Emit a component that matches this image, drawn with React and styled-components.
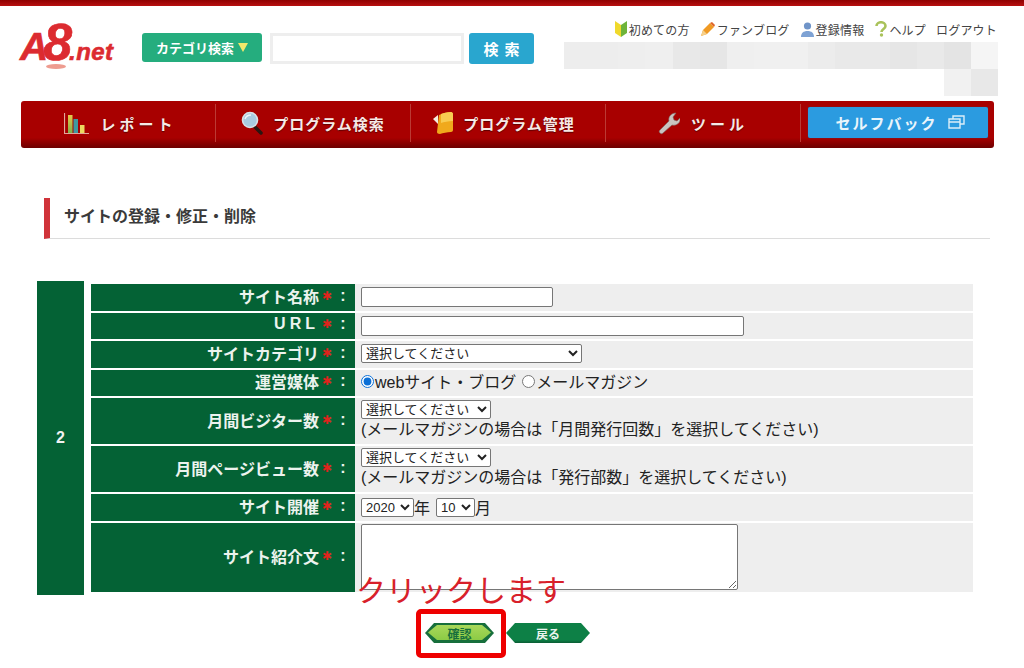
import React from 'react'
import styled, { createGlobalStyle } from 'styled-components'

const GlobalStyle = createGlobalStyle`
	html, body {
		margin: 0;
		padding: 0;
		background: #fff;
		font-family: "Liberation Sans", "Noto Sans CJK JP", sans-serif;
		color: #222;
	}
`

const Page = styled.div`
	position: relative;
	width: 1024px;
	height: 668px;
	overflow: hidden;
`

const TopBar = styled.div`
	height: 6px;
	background: linear-gradient(#8f0000, #b80f0f);
`

const Header = styled.header`
	display: flex;
	height: 95px;
	padding: 0 26px 0 20px;
`

const Logo = styled.div`
	position: relative;
	display: flex;
	align-items: baseline;
	width: 95px;
	height: 46px;
	margin-top: 13px;
	color: #dc2b30;
	font-weight: bold;
	font-style: italic;
	white-space: nowrap;
	-webkit-text-stroke: 0.6px #dc2b30;
`

const LogoA = styled.span`
	font-size: 39px;
	line-height: 46px;
	letter-spacing: -5px;
`

const LogoEight = styled.span`
	font-size: 52px;
	line-height: 46px;
	letter-spacing: -3px;
`

const LogoNet = styled.span`
	font-size: 24px;
	letter-spacing: 0.4px;
`

const LogoShadow = styled.span`
	position: absolute;
	left: 26px;
	top: 45px;
	width: 20px;
	height: 5px;
	border-radius: 50%;
	background: #ee9c90;
`

const SearchGroup = styled.div`
	display: flex;
	margin: 27px 0 0 27px;
	height: 31px;
`

const CategoryButton = styled.div`
	display: flex;
	align-items: center;
	justify-content: center;
	gap: 4px;
	width: 120px;
	height: 29px;
	border-radius: 3px;
	background: #25ad7e;
	color: #fff;
	font-size: 13px;
	font-weight: bold;
`

const Triangle = styled.span`
	width: 0;
	height: 0;
	border-left: 5px solid transparent;
	border-right: 5px solid transparent;
	border-top: 9px solid #f2e96b;
`

const SearchBox = styled.input`
	box-sizing: border-box;
	width: 194px;
	height: 31px;
	margin-left: 8px;
	border: 3px solid #eeeeee;
	background: #fff;
	outline: none;
`

const SearchButton = styled.div`
	display: flex;
	align-items: center;
	justify-content: center;
	width: 65px;
	height: 31px;
	margin-left: 5px;
	border-radius: 3px;
	background: #29a6cf;
	color: #fff;
	font-size: 15px;
	font-weight: bold;
	letter-spacing: 6px;
	text-indent: 6px;
`

const UserArea = styled.div`
	display: flex;
	flex-direction: column;
	width: 434px;
	margin-left: auto;
`

const UtilityLinks = styled.div`
	display: flex;
	justify-content: flex-end;
	align-items: center;
	gap: 10px;
	height: 20px;
	margin: 13px 1px 3px 0;
	font-size: 12px;
	letter-spacing: 0.2px;
	color: #444;
	white-space: nowrap;
`

const UtilityLink = styled.span`
	display: flex;
	align-items: center;
	gap: 1px;
`

const Mosaic = styled.div`
	display: grid;
	grid-template-columns: repeat(16, 1fr);
	grid-auto-rows: 27px;
`

const MosaicCell = styled.div`
	background: ${p => p.$tone};
`

const Nav = styled.nav`
	display: grid;
	grid-template-columns: repeat(4, 195px) 1fr;
	box-sizing: border-box;
	width: 973px;
	height: 47px;
	margin-left: 21px;
	padding: 3px 0 6px;
	border-radius: 3px;
	background: linear-gradient(#a80000 0, #a80000 78%, #6d0000 100%);
`

const NavItem = styled.div`
	display: flex;
	align-items: center;
	justify-content: center;
	gap: ${p => p.$gap || 10}px;
	padding-left: ${p => p.$push || 0}px;
	padding-right: ${p => p.$shift || 0}px;
	border-right: ${p => p.$last ? 'none' : '1px solid #bb3a34'};
	color: #f6e9e6;
	font-size: 15px;
	font-weight: bold;
	letter-spacing: ${p => p.$spacing || 1}px;
	text-shadow: 0 1px 1px #5c0000;
	white-space: nowrap;
`

const SelfBack = styled.div`
	display: flex;
	align-items: center;
	justify-content: center;
	gap: 10px;
	box-sizing: border-box;
	width: 180px;
	height: 31px;
	margin: 0 0 1px 1px;
	padding-left: 4px;
	border-radius: 2px;
	background: #2b9be0;
	color: #eaf5fb;
	font-size: 15px;
	font-weight: bold;
	letter-spacing: 2px;
	text-shadow: none;
	box-shadow: 0 0 1px #0d5a8a;
`

const Heading = styled.h2`
	box-sizing: border-box;
	width: 946px;
	height: 41px;
	margin: 50px 0 0 44px;
	padding: 0 0 7px 14px;
	display: flex;
	align-items: center;
	border-left: 6px solid #d0333a;
	border-bottom: 1px solid #dcdcdc;
	color: #3a3a3a;
	font-size: 16px;
	font-weight: bold;
`

const FormArea = styled.div`
	display: flex;
	gap: 7px;
	width: 936px;
	height: 314px;
	margin: 42px 0 0 37px;
`

const NumberCell = styled.div`
	display: flex;
	align-items: center;
	justify-content: center;
	width: 47px;
	background: #046235;
	color: #f1f1f1;
	font-size: 16px;
	font-weight: bold;
`

const Rows = styled.div`
	display: flex;
	flex-direction: column;
	gap: 2px;
	flex: 1;
	padding-top: 3px;
`

const Row = styled.div`
	display: flex;
	height: ${p => p.$height}px;
`

const Label = styled.div`
	display: flex;
	align-items: center;
	justify-content: flex-end;
	box-sizing: border-box;
	width: 264px;
	padding: 0 8px 3px 0;
	background: #046235;
	color: #ecf3ee;
	font-size: 16px;
	font-weight: bold;
	letter-spacing: ${p => p.$spacing || 0}px;
	white-space: nowrap;
`

const Star = styled.span`
	width: 14px;
	margin-left: 1px;
	text-align: center;
	color: #e0241c;
	font-family: "DejaVu Sans", sans-serif;
	font-size: 12px;
	font-weight: normal;
	letter-spacing: 0;
`

const Colon = styled.span`
	margin-left: 5px;
	width: 8px;
	text-align: center;
	letter-spacing: 0;
`

const Value = styled.div`
	flex: 1;
	box-sizing: border-box;
	display: flex;
	flex-direction: ${p => p.$stack ? 'column' : 'row'};
	align-items: ${p => p.$stack ? 'flex-start' : 'center'};
	padding: ${p => p.$stack ? '2px' : '0'} 0 ${p => p.$raised || 0}px 6px;
	background: #eeeeee;
	color: #222;
	font-size: 16px;
	white-space: nowrap;
`

const TextInput = styled.input`
	box-sizing: border-box;
	width: ${p => p.$width}px;
	height: 20px;
	padding: 1px 2px;
	border: 1px solid #767676;
	border-radius: 2px;
	background: #fff;
`

const Select = styled.select`
	box-sizing: border-box;
	width: ${p => p.$width}px;
	height: ${p => p.$height || 19}px;
	margin-left: ${p => p.$left || 0}px;
	border: 1px solid #767676;
	border-radius: 2px;
	background: #fff;
	color: #222;
	font-family: "Liberation Sans", "Noto Sans CJK JP", sans-serif;
	font-size: 13px;
`

const Radio = styled.input`
	width: 13px;
	height: 13px;
	margin: 0 1px 0 ${p => p.$left || 0}px;
	accent-color: #0b6fd6;
`

const Note = styled.div`
	line-height: 21px;
`

const TextArea = styled.textarea`
	box-sizing: border-box;
	display: block;
	width: 377px;
	height: 66px;
	border: 1px solid #767676;
	border-radius: 2px;
	background: #fff;
`

const Buttons = styled.div`
	display: flex;
	gap: 12px;
	margin: 28px 0 0 425px;
`

const chamfer = 'polygon(9px 0, calc(100% - 9px) 0, 100% 50%, calc(100% - 9px) 100%, 9px 100%, 0 50%)'

const FormButton = styled.div`
	position: relative;
	display: flex;
	align-items: center;
	justify-content: center;
	width: ${p => p.$width}px;
	height: 20px;
	clip-path: ${chamfer};
	background: ${p => p.$primary ? '#176f3c' : 'linear-gradient(#0d8046 0, #0d8046 85%, #0a5c33 100%)'};
	color: ${p => p.$primary ? '#176f3c' : '#e9f4ec'};
	font-size: 12px;
	font-weight: bold;

	${p => p.$primary && `
		&::before {
			content: "";
			position: absolute;
			inset: 2px 3px 3px;
			clip-path: ${chamfer};
			background: linear-gradient(#a8d85a, #8ccb45);
		}
	`}
`

const ButtonText = styled.span`
	position: relative;
`

const ClickNote = styled.div`
	position: absolute;
	left: 356px;
	top: 569px;
	color: #d8202a;
	font-family: "Noto Sans CJK JP", sans-serif;
	font-size: 30px;
	font-weight: 400;
	line-height: 38px;
	white-space: nowrap;
`

const ClickFrame = styled.div`
	position: absolute;
	left: 416px;
	top: 609px;
	box-sizing: border-box;
	width: 90px;
	height: 49px;
	border: 5px solid #ee0000;
	border-radius: 5px;
`

const BeginnerIcon = () =>
	<svg width="14" height="18" viewBox="0 0 14 18">
		<path d="M1 1l6 4v12l-6-4z" fill="#f0d92c" />
		<path d="M13 1l-6 4v12l6-4z" fill="#6fb43a" />
	</svg>

const PencilIcon = () =>
	<svg width="16" height="16" viewBox="0 0 16 16">
		<path d="M1 15l2-6 7-7 4 4-7 7z" fill="#f09a24" />
		<path d="M1 15l2-6 4 4z" fill="#f6d08a" />
		<path d="M10 2l2-1 3 3-1 2z" fill="#e0662a" />
	</svg>

const PersonIcon = () =>
	<svg width="15" height="15" viewBox="0 0 15 15">
		<circle cx="7.5" cy="4" r="3.6" fill="#6f94c8" />
		<path d="M1 15c0-4 2.5-6 6.5-6s6.5 2 6.5 6z" fill="#7ea2d4" />
	</svg>

const HelpIcon = () =>
	<svg width="14" height="16" viewBox="0 0 14 16">
		<path d="M2.5 5c0-5 9-5 9 0 0 3-4 3-4 6" fill="none" stroke="#a9c25a" strokeWidth="2.6" />
		<circle cx="7.5" cy="14" r="1.7" fill="#a9c25a" />
	</svg>

const ChartIcon = () =>
	<svg width="25" height="23" viewBox="0 0 25 23">
		<defs>
			<linearGradient id="barGreen" x1="0" y1="0" x2="0" y2="1">
				<stop offset="0" stopColor="#e8c84a" />
				<stop offset="1" stopColor="#7fb24a" />
			</linearGradient>
		</defs>
		<path d="M.5 1v20.5H25" fill="none" stroke="#e2a79a" strokeWidth="1.2" />
		<rect x="4" y="3" width="4.5" height="18" fill="url(#barGreen)" />
		<rect x="9.5" y="7" width="4.5" height="14" fill="#3f9aa0" />
		<rect x="16" y="13" width="4.5" height="8" fill="#ecd860" />
	</svg>

const SearchIcon = () =>
	<svg width="22" height="24" viewBox="0 0 22 24">
		<path d="M14 16l6 6" stroke="#2a1510" strokeWidth="3.5" strokeLinecap="round" />
		<circle cx="9" cy="9" r="7.5" fill="#a9cbe0" stroke="#d8e2e8" strokeWidth="1.6" />
		<path d="M4 8c1-3 3-4 6-4" fill="none" stroke="#eef6fa" strokeWidth="1.4" />
	</svg>

const FolderIcon = () =>
	<svg width="20" height="24" viewBox="0 0 20 24">
		<path d="M6 4c4-2 8-3 12-3 1 0 2 1 2 2v16c0 1-1 2-2 2-4 0-8 1-11 2-2 0-3-1-3-2z" fill="#f0a91c" />
		<path d="M8 3c3-1 6-2 10-2 1 0 2 1 2 2v7c-5 0-9 1-12 2z" fill="#f8cc52" />
		<path d="M0 8l5-4v9z" fill="#f4eee0" />
	</svg>

const WrenchIcon = () =>
	<svg width="22" height="24" viewBox="0 0 22 24">
		<path d="M2 22c-1-1-1-2 0-3l9-9c-1-4 2-8 7-8l-3 4 1 3 3 1 3-3c1 5-4 8-8 7l-9 8c-1 1-2 1-3 0z" fill="#c9c4c0" stroke="#7c6a66" strokeWidth=".6" />
	</svg>

const WindowsIcon = () =>
	<svg width="17" height="15" viewBox="0 0 17 15">
		<path d="M5 4V1h11v8h-4M1 4h11v9H1zM1 7h11" fill="none" stroke="#dceef8" strokeWidth="1.4" />
	</svg>

const tones = [
	'#ededed', '#ededed', '#eeeeee', '#efefef', '#e8e8e8', '#e6e6e6', '#efefef', '#f0f0f0',
	'#f0f0f0', '#ececec', '#e9e9e9', '#e9e9e9', '#e6e6e6', '#e9e9e9', '#e4e4e4', '#f5f5f5',
	'#fff', '#fff', '#fff', '#fff', '#fff', '#fff', '#fff', '#fff',
	'#fff', '#fff', '#fff', '#fff', '#fff', '#fff', '#f1f1f1', '#e8e8e8',
]

const RequiredLabel = ({ children, spacing }) =>
	<Label $spacing={spacing}>
		{children}
		<Star>✱</Star>
		<Colon>:</Colon>
	</Label>

const App = () =>
	<Page>
		<GlobalStyle />
		<TopBar />
		<Header>
			<Logo>
				<LogoA>A</LogoA><LogoEight>8</LogoEight><LogoNet>.net</LogoNet>
				<LogoShadow />
			</Logo>
			<SearchGroup>
				<CategoryButton>カテゴリ検索<Triangle /></CategoryButton>
				<SearchBox />
				<SearchButton>検索</SearchButton>
			</SearchGroup>
			<UserArea>
				<UtilityLinks>
					<UtilityLink><BeginnerIcon />初めての方</UtilityLink>
					<UtilityLink><PencilIcon />ファンブログ</UtilityLink>
					<UtilityLink><PersonIcon />登録情報</UtilityLink>
					<UtilityLink><HelpIcon />ヘルプ</UtilityLink>
					<UtilityLink>ログアウト</UtilityLink>
				</UtilityLinks>
				<Mosaic>
					{tones.map((tone, i) => <MosaicCell key={i} $tone={tone} />)}
				</Mosaic>
			</UserArea>
		</Header>
		<Nav>
			<NavItem $spacing={4} $gap={11} $push={5}><ChartIcon />レポート</NavItem>
			<NavItem><SearchIcon />プログラム検索</NavItem>
			<NavItem $shift={8}><FolderIcon />プログラム管理</NavItem>
			<NavItem $spacing={4} $gap={11}><WrenchIcon />ツール</NavItem>
			<NavItem $last>
				<SelfBack>セルフバック<WindowsIcon /></SelfBack>
			</NavItem>
		</Nav>
		<Heading>サイトの登録・修正・削除</Heading>
		<FormArea>
			<NumberCell>2</NumberCell>
			<Rows>
				<Row $height={26.5}>
					<RequiredLabel>サイト名称</RequiredLabel>
					<Value><TextInput $width={192} /></Value>
				</Row>
				<Row $height={26.5}>
					<RequiredLabel spacing={4}>URL</RequiredLabel>
					<Value><TextInput $width={383} /></Value>
				</Row>
				<Row $height={26.5}>
					<RequiredLabel>サイトカテゴリ</RequiredLabel>
					<Value $raised={1}>
						<Select $width={221}><option>選択してください</option></Select>
					</Value>
				</Row>
				<Row $height={26.5}>
					<RequiredLabel>運営媒体</RequiredLabel>
					<Value $raised={3}>
						<Radio type="radio" name="media" defaultChecked />webサイト・ブログ
						<Radio type="radio" name="media" $left={6} />メールマガジン
					</Value>
				</Row>
				<Row $height={46}>
					<RequiredLabel>月間ビジター数</RequiredLabel>
					<Value $stack>
						<Select $width={130}><option>選択してください</option></Select>
						<Note>(メールマガジンの場合は「月間発行回数」を選択してください)</Note>
					</Value>
				</Row>
				<Row $height={46}>
					<RequiredLabel>月間ページビュー数</RequiredLabel>
					<Value $stack>
						<Select $width={130}><option>選択してください</option></Select>
						<Note>(メールマガジンの場合は「発行部数」を選択してください)</Note>
					</Value>
				</Row>
				<Row $height={26.5}>
					<RequiredLabel>サイト開催</RequiredLabel>
					<Value>
						<Select $width={53}><option>2020</option></Select>年
						<Select $width={39} $left={6}><option>10</option></Select>月
					</Value>
				</Row>
				<Row $height={69}>
					<RequiredLabel>サイト紹介文</RequiredLabel>
					<Value><TextArea /></Value>
				</Row>
			</Rows>
		</FormArea>
		<Buttons>
			<FormButton $primary $width={69}><ButtonText>確認</ButtonText></FormButton>
			<FormButton $width={84}><ButtonText>戻る</ButtonText></FormButton>
		</Buttons>
		<ClickNote>クリックします</ClickNote>
		<ClickFrame />
	</Page>

export default App
